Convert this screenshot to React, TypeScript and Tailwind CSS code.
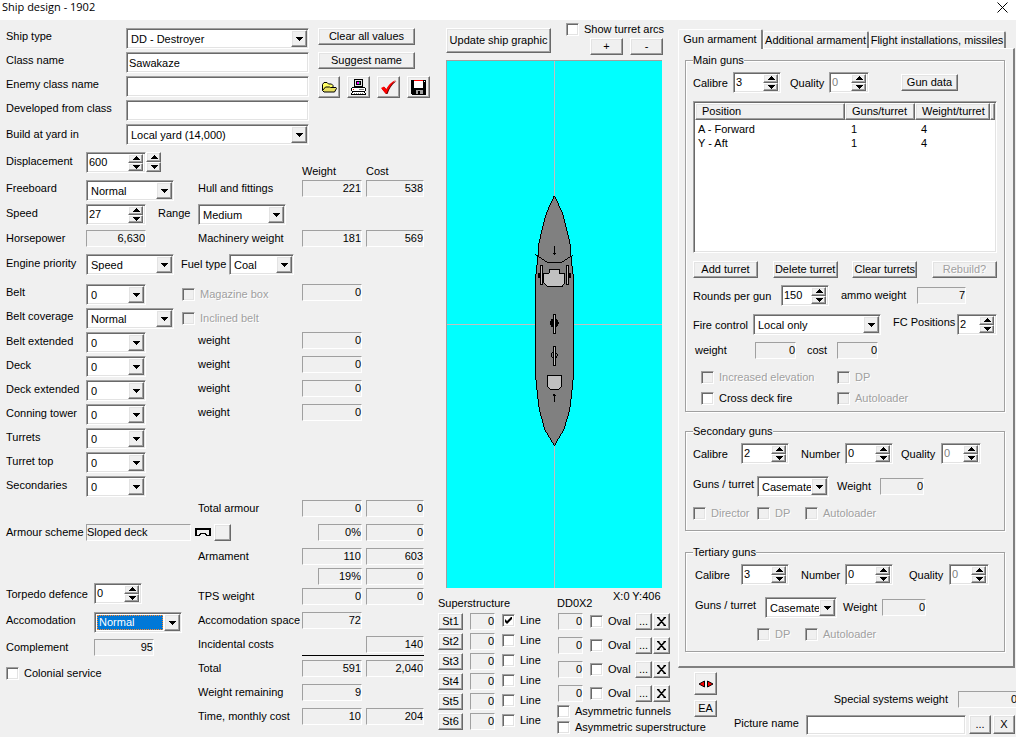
import type { ReactNode } from "react";
import clsx from "clsx";

const sunken =
  "border border-t-[#a0a0a0] border-l-[#a0a0a0] border-r-white border-b-white p-px shadow-[inset_1px_1px_#696969,inset_-1px_-1px_#e3e3e3]";
const raised =
  "bg-[#f0f0f0] border border-t-white border-l-white border-r-[#696969] border-b-[#696969] shadow-[inset_-1px_-1px_#a0a0a0,inset_1px_1px_#e3e3e3]";
const disabledText = "text-[#a0a0a0] [text-shadow:1px_1px_#fff]";

type LabelProps = {
  htmlFor?: string;
  className?: string;
  children: ReactNode;
};

function Label({ htmlFor, className, children }: LabelProps) {
  return (
    <label htmlFor={htmlFor} className={clsx("shrink-0 leading-4", className)}>
      {children}
    </label>
  );
}

type FieldProps = {
  id: string;
  value: string;
  className?: string;
  disabled?: boolean;
  selected?: boolean;
};

function Combo({ id, value, className, selected }: FieldProps) {
  return (
    <div className={clsx("flex h-[21px] shrink-0 bg-white", sunken, className)}>
      <select
        id={id}
        defaultValue={value}
        className={clsx(
          "min-w-0 flex-1 appearance-none overflow-hidden outline-none",
          selected
            ? "m-px border border-dotted border-[#ff8728] bg-[#0078d7] pl-px text-white"
            : "pt-px pl-[3px]"
        )}
      >
        <option>{value}</option>
      </select>
      <span className={clsx("flex w-4 shrink-0 items-center justify-center", raised)} aria-hidden="true">
        <svg width="7" height="4" shapeRendering="crispEdges">
          <path d="M0 0h7L3.5 4z" />
        </svg>
      </span>
    </div>
  );
}

function SpinButtons() {
  return (
    <span className="flex w-[15px] shrink-0 flex-col">
      <button aria-label="Increase" className={clsx("flex flex-1 items-center justify-center", raised)}>
        <svg width="8" height="4" className="shrink-0" shapeRendering="crispEdges">
          <path d="M0 4h8L4 0z" />
        </svg>
      </button>
      <button aria-label="Decrease" className={clsx("flex flex-1 items-center justify-center", raised)}>
        <svg width="8" height="4" className="shrink-0" shapeRendering="crispEdges">
          <path d="M0 0h8L4 4z" />
        </svg>
      </button>
    </span>
  );
}

function Spin({ id, value, className, disabled }: FieldProps) {
  return (
    <div className={clsx("flex h-[21px] shrink-0 bg-white pr-0.5!", sunken, className)}>
      <input
        id={id}
        defaultValue={value}
        disabled={disabled}
        className="min-w-0 flex-1 pl-px outline-none disabled:text-[#808080]"
      />
      <SpinButtons />
    </div>
  );
}

function Value({ className, children }: { className?: string; children: ReactNode }) {
  return (
    <output
      className={clsx(
        "block h-[17px] shrink-0 border border-t-[#a0a0a0] border-l-[#a0a0a0] border-r-white border-b-white text-right leading-[15px]",
        className
      )}
    >
      {children}
    </output>
  );
}

type CheckProps = {
  label: string;
  checked?: boolean;
  disabled?: boolean;
  className?: string;
};

function Check({ label, checked, disabled, className }: CheckProps) {
  return (
    <label
      className={clsx(
        "flex h-[13px] shrink-0 items-center gap-[5px] whitespace-nowrap",
        disabled && disabledText,
        className
      )}
    >
      <span className="grid place-items-center">
        <input
          type="checkbox"
          defaultChecked={checked}
          disabled={disabled}
          className={clsx("col-start-1 row-start-1 size-[13px] appearance-none bg-white disabled:bg-[#f0f0f0]", sunken)}
        />
        {checked && (
          <svg width="7" height="7" className="pointer-events-none col-start-1 row-start-1">
            <path d="M0 2v3l2 2 5-5V-1L2 4z" />
          </svg>
        )}
      </span>
      {label}
    </label>
  );
}

type ButtonProps = {
  className?: string;
  disabled?: boolean;
  label?: string;
  children?: ReactNode;
};

function Button({ className, disabled, label, children }: ButtonProps) {
  return (
    <button
      disabled={disabled}
      aria-label={label}
      className={clsx(
        "flex shrink-0 items-center justify-center whitespace-nowrap",
        raised,
        disabled && disabledText,
        className
      )}
    >
      {children}
    </button>
  );
}

function FolderIcon() {
  return (
    <svg width="15" height="11" viewBox="0 0 15 11" strokeLinejoin="round">
      <path d="M.5 8.5v-6l1.500-2h3l1.500 1.500h3l1.500 1.500v2" fill="#ff6" stroke="#000" />
      <path d="M.5 8.500 3.500 5h4l1 .5h5.500l.5 1-2 3.500H2z" fill="#e8e060" stroke="#000" />
    </svg>
  );
}

function ComputerIcon() {
  return (
    <svg width="15" height="16" viewBox="0 0 15 16" className="shrink-0" shapeRendering="crispEdges">
      <path d="M3 0h9v8H3z" />
      <path d="M4 1h7v6H4z" fill="#e3e3e3" />
      <path d="M5 2h5v4H5z" />
      <path d="M6 3h2v2H6z" fill="#f0f" />
      <path d="M8 3h1v2H8z" fill="#00c060" />
      <path d="M1 8h13v1h1v3h-1v1H1v-1H0V9h1z" />
      <path d="M1 9h13v3H1z" fill="#fff" />
      <path d="M2 10h1v1H2z" fill="red" />
      <path d="M8 10h5v1H8z" fill="#808080" />
      <path d="M2 12h11v1h1v1h1v2H0v-2h1v-1h1z" />
      <path d="M2 13h11v1h1v1H1v-1h1z" fill="#fff" />
      <path d="M3 14h1v1H3zM5 14h1v1H5zM7 14h1v1H7zM9 14h1v1H9zM11 14h1v1h-1z" fill="#808080" />
    </svg>
  );
}

function TickIcon() {
  return (
    <svg width="16" height="15" viewBox="0 0 16 15">
      <path d="M1 9 3.500 7l2 2.500Q9 3 15.500 1 9 6 6.500 14H5z" fill="#600" />
      <path d="M0 8 3 6.500l2 3Q8.500 2.500 15 0 8.500 5.500 5.500 13.500H4.500z" fill="red" />
    </svg>
  );
}

function DiskIcon() {
  return (
    <svg width="15" height="15" viewBox="0 0 15 15" shapeRendering="crispEdges">
      <path d="M0 0h15v15H1l-1-1z" />
      <path d="M3 1h9v7H3z" fill="#fff" />
      <path d="M3 0h9v1H3z" fill="red" />
      <path d="M13 1h1v1h-1z" fill="#fff" />
      <path d="M5 10h7v4H5z" fill="#a0a0a0" />
      <path d="M7 11h2v3H7z" />
    </svg>
  );
}

/* Cross section of a sloped armour deck */
function SlopedDeckIcon() {
  return (
    <svg width="16" height="9" viewBox="0 0 16 9" fill="none" stroke="#000" shapeRendering="crispEdges">
      <path d="M0 1h16" strokeWidth="2" />
      <path d="M1 0v8M15 0v8" strokeWidth="2" />
      <path d="M0 7.500h4L6 5.500h4l2 2h4" />
    </svg>
  );
}

/* Top view of the hull, drawn at three units to the pixel */
function ShipPlan() {
  return (
    <svg viewBox="1 1 215 527" className="size-full" shapeRendering="crispEdges" role="img" aria-label="Ship plan">
      <path d="M108.500 0v528M0 264.500h216" stroke="#c0c0c0" />
      <g transform="translate(74 120) scale(.33333)" fill="none" stroke="#000" strokeWidth="3">
        <path
          d="M103 47 79 100 67 145 57 190 53 240 47 290V590L52 640 58 690 75 750 103 797 131 750 149 690 155 640 160 590V290L154 240 150 190 139 145 128 100z"
          fill="#808080"
        />
        <path d="M46 223 82 247H125L158 226M103 198v26M98 218l5 6 5-6M103 665v-24M98 648l5-6 5 6" />
        <path d="M88 268h30v12h17v28l-9 12H82l-10-12v-28h16z" fill="#c0c0c0" />
        <path d="M55 280h7v14h-7zM145 280h7v14h-7z" fill="#000" />
        <path d="M61 257h7v56h-7zM139 257h7v56h-7z" fill="#c0c0c0" />
        <circle cx="103" cy="429" r="12" fill="#000" />
        <circle cx="103" cy="526" r="9" />
        <path d="M100 403h7v57h-7zM100 499h7v57h-7z" fill="#c0c0c0" />
        <path d="M82 586h43v33l-8 9H91l-9-9z" fill="#c0c0c0" />
      </g>
    </svg>
  );
}

type RowProps = {
  className?: string;
  left?: ReactNode;
  label?: ReactNode;
  weight?: string;
  cost?: string;
  percent?: boolean;
};

function Row({ className = "h-6", left, label, weight, cost, percent }: RowProps) {
  return (
    <div className={clsx("flex items-start", className)}>
      {left && <div className="flex w-48 shrink-0 items-start">{left}</div>}
      <span className="w-[104px] shrink-0 leading-4 whitespace-nowrap">{label}</span>
      <div className="flex w-[60px] shrink-0 justify-end">
        {weight && <Value className={percent ? "w-11" : "w-full"}>{weight}</Value>}
      </div>
      {cost && <Value className="ml-1 w-[58px]">{cost}</Value>}
    </div>
  );
}

const armour = [
  { id: "belt-extended", name: "Belt extended", weight: "0" },
  { id: "deck", name: "Deck", weight: "0" },
  { id: "deck-extended", name: "Deck extended", weight: "0" },
  { id: "conning-tower", name: "Conning tower", weight: "0" },
  { id: "turrets", name: "Turrets" },
  { id: "turret-top", name: "Turret top" },
  { id: "secondaries", name: "Secondaries" },
];

function GeneralForm() {
  return (
    <div className="flex gap-[9px]">
      <div className="grid grid-cols-[120px_183px] gap-y-[3px]">
        <Label htmlFor="ship-type">Ship type</Label>
        <Combo id="ship-type" value="DD - Destroyer" />
        <Label htmlFor="class-name">Class name</Label>
        <input id="class-name" defaultValue="Sawakaze" className={clsx("h-[21px] bg-white pl-0.5 outline-none", sunken)} />
        <Label htmlFor="enemy-class">Enemy class name</Label>
        <input id="enemy-class" className={clsx("h-[21px] bg-white outline-none", sunken)} />
        <Label htmlFor="developed-from">Developed from class</Label>
        <input id="developed-from" className={clsx("h-[21px] bg-white outline-none", sunken)} />
        <Label htmlFor="yard" className="pt-0.5">Build at yard in</Label>
        <Combo id="yard" value="Local yard (14,000)" />
      </div>
      <div className="flex flex-col gap-[7px]">
        <Button className="h-[17px] w-[97px]">Clear all values</Button>
        <Button className="h-[17px] w-[97px]">Suggest name</Button>
        <div className="flex gap-[7px]">
          <Button label="Open" className="h-[22px] w-[22px]"><FolderIcon /></Button>
          <Button label="Load from computer" className="h-[22px] w-[23px]"><ComputerIcon /></Button>
          <Button label="Accept" className="h-[22px] w-[23px]"><TickIcon /></Button>
          <Button label="Save" className="h-[22px] w-[23px]"><DiskIcon /></Button>
        </div>
      </div>
    </div>
  );
}

function HullForm() {
  return (
    <div className="mt-[7px]">
      <div className="flex h-7 items-start">
        <Label htmlFor="displacement" className="w-20 pt-px">Displacement</Label>
        <Spin id="displacement" value="600" className="w-[60px]" />
        <span className="flex h-5"><SpinButtons /></span>
        <span className="mt-[11px] ml-[141px] w-16 leading-4">Weight</span>
        <span className="mt-[11px] leading-4">Cost</span>
      </div>
      <Row
        left={<>
          <Label htmlFor="freeboard" className="w-20">Freeboard</Label>
          <Combo id="freeboard" value="Normal" className="w-[88px]" />
        </>}
        label="Hull and fittings"
        weight="221"
        cost="538"
      />
      <div className="flex h-[26px] items-start">
        <Label htmlFor="speed" className="w-20 pt-px">Speed</Label>
        <Spin id="speed" value="27" className="w-[60px]" />
        <Label htmlFor="range" className="ml-3 w-10 pt-px">Range</Label>
        <Combo id="range" value="Medium" className="w-[88px]" />
      </div>
      <Row
        left={<>
          <span className="w-20 leading-4">Horsepower</span>
          <Value className="w-[60px]">6,630</Value>
        </>}
        label="Machinery weight"
        weight="181"
        cost="569"
      />
      <div className="flex h-[30px] items-start">
        <Label htmlFor="engine" className="w-20 pt-px">Engine priority</Label>
        <Combo id="engine" value="Speed" className="w-[88px]" />
        <Label htmlFor="fuel" className="ml-[7px] w-12 pt-0.5">Fuel type</Label>
        <Combo id="fuel" value="Coal" className="w-[65px]" />
      </div>
      <div className="flex h-6 items-start">
        <Label htmlFor="belt" className="w-20">Belt</Label>
        <Combo id="belt" value="0" className="w-[60px]" />
        <Check label="Magazine box" disabled className="mt-1 ml-9 w-[120px]" />
        <Value className="w-[60px]">0</Value>
      </div>
      <div className="flex h-6 items-start">
        <Label htmlFor="belt-coverage" className="w-20">Belt coverage</Label>
        <Combo id="belt-coverage" value="Normal" className="w-[88px]" />
        <Check label="Inclined belt" disabled className="mt-1 ml-2" />
      </div>
      {armour.map((item) => (
        <Row
          key={item.id}
          left={<>
            <Label htmlFor={item.id} className="w-20 pt-px whitespace-nowrap">{item.name}</Label>
            <Combo id={item.id} value="0" className="w-[60px]" />
          </>}
          label={item.weight && "weight"}
          weight={item.weight}
        />
      ))}
      <Row left={<span />} label="Total armour" weight="0" cost="0" />
      <div className="flex h-6 items-start">
        <span className="w-20 shrink-0 leading-4 whitespace-nowrap">Armour scheme</span>
        <Value className="w-[105px] text-left!">Sloped deck</Value>
        <span className="ml-1 pt-1"><SlopedDeckIcon /></span>
        <Button label="Change armour scheme" className="ml-[3px] h-[17px] w-[17px]" />
        <Value className="ml-[87px] w-11">0%</Value>
        <Value className="ml-1 w-[58px]">0</Value>
      </div>
    </div>
  );
}

function WeightSummary() {
  return (
    <div className="flex">
      <div className="flex w-48 flex-col pt-[35px]">
        <div className="flex h-[29px] items-start">
          <Label htmlFor="torpedo" className="w-[88px] pt-[3px] whitespace-nowrap">Torpedo defence</Label>
          <Spin id="torpedo" value="0" className="w-12" />
        </div>
        <div className="flex h-[27px] items-start">
          <Label htmlFor="accomodation" className="w-[88px]">Accomodation</Label>
          <Combo id="accomodation" value="Normal" selected className="w-[88px]" />
        </div>
        <div className="flex h-7 items-start">
          <span className="w-[88px] leading-4">Complement</span>
          <Value className="w-[60px]">95</Value>
        </div>
        <Check label="Colonial service" />
      </div>
      <div>
        <Row className="h-5" label="Armament" weight="110" cost="603" />
        <Row className="h-5" weight="19%" cost="0" percent />
        <Row label="TPS weight" weight="0" cost="0" />
        <Row label="Accomodation space" weight="72" />
        <Row className="h-[19px]" label="Incidental costs" cost="140" />
        <hr className="mb-1 ml-[104px] border-black" />
        <Row label="Total" weight="591" cost="2,040" />
        <Row label="Weight remaining" weight="9" />
        <Row label="Time, monthly cost" weight="10" cost="204" />
      </div>
    </div>
  );
}

function ShipGraphic() {
  return (
    <section className="w-60 shrink-0 pt-[3px]">
      <div className="flex h-[37px] items-start pl-2">
        <Button className="mt-[5px] h-[25px] w-[105px]">Update ship graphic</Button>
        <div className="ml-[15px]">
          <Check label="Show turret arcs" />
          <div className="mt-0.5 flex gap-[7px] pl-6">
            <Button className="h-[17px] w-[33px]">+</Button>
            <Button className="h-[17px] w-[33px]">-</Button>
          </div>
        </div>
      </div>
      <div className="ml-2 h-[528px] w-[216px] border-t border-l border-[#a0a0a0] bg-[#00ffff]">
        <ShipPlan />
      </div>
      <div className="flex h-[25px] items-end pb-0.5 leading-4">
        <span className="w-[119px]">Superstructure</span>
        <span className="w-14">DD0X2</span>
        <span className="self-start whitespace-nowrap">X:0 Y:406</span>
      </div>
      <div className="flex">
        <div className="w-[119px] shrink-0">
          {["St1", "St2", "St3", "St4", "St5", "St6"].map((name, i) => (
            <div key={name} className="flex h-5 items-start">
              <Button className="h-[17px] w-[25px]">{name}</Button>
              <Value className="mx-[7px] w-[25px]">0</Value>
              <Check label="Line" checked={i === 0} className="mt-px" />
            </div>
          ))}
        </div>
        <div>
          {["A", "B", "C", "D"].map((name) => (
            <div key={name} className="flex h-6 items-start">
              <Value className="mr-[7px] ml-px w-[25px]">0</Value>
              <Check label="Oval" className="mt-0.5 w-[45px]" />
              <Button className="h-[17px] w-[17px]">...</Button>
              <Button label="Remove" className="ml-px h-[17px] w-[17px]">
                <svg width="9" height="9" stroke="#000" strokeWidth="1.5">
                  <path d="M1 .5l7 8M8 .5l-7 8M0 .5h2.500M6.500.5H9M0 8.500h2.500M6.500 8.500H9" />
                </svg>
              </Button>
            </div>
          ))}
          <Check label="Asymmetric funnels" className="-mt-1" />
          <Check label="Asymmetric superstructure" className="mt-[3px]" />
        </div>
      </div>
    </section>
  );
}

function Group({ title, className, children }: { title: string; className?: string; children: ReactNode }) {
  return (
    <fieldset
      className={clsx(
        "border border-[#a0a0a0] px-[7px] pt-[5px] shadow-[inset_1px_1px_#fff,1px_1px_#fff]",
        className
      )}
    >
      <legend className="bg-[#f0f0f0] leading-[14px]">{title}</legend>
      {children}
    </fieldset>
  );
}

const headCell = clsx("text-left font-normal", raised);

function MainGuns() {
  return (
    <Group title="Main guns" className="pb-1.5">
      <div className="flex items-center">
        <Label htmlFor="main-calibre" className="w-10">Calibre</Label>
        <Spin id="main-calibre" value="3" className="w-12" />
        <Label htmlFor="main-quality" className="ml-[9px] w-[39px]">Quality</Label>
        <Spin id="main-quality" value="0" disabled className="w-10" />
        <Button className="ml-8 h-[17px] w-[57px]">Gun data</Button>
      </div>
      <div className={clsx("mt-2 h-[152px] bg-white", sunken)}>
        <table className="w-full table-fixed border-separate border-spacing-0">
          <thead>
            <tr className="h-[17px]">
              <th className={clsx("w-[150px] pl-1.5", headCell)}>Position</th>
              <th className={clsx("w-[70px] pl-1.5", headCell)}>Guns/turret</th>
              <th className={clsx("w-[75px] pl-1.5", headCell)}>Weight/turret</th>
              <th className={headCell} />
            </tr>
          </thead>
          <tbody className="leading-[14px]">
            <tr>
              <td className="pt-0.5 pl-[3px]">A - Forward</td>
              <td className="pt-0.5 pl-1.5">1</td>
              <td className="pt-0.5 pl-1.5">4</td>
            </tr>
            <tr>
              <td className="pl-[3px]">Y - Aft</td>
              <td className="pl-1.5">1</td>
              <td className="pl-1.5">4</td>
            </tr>
          </tbody>
        </table>
      </div>
      <div className="mt-2 flex justify-between">
        <Button className="h-[17px] w-[65px]">Add turret</Button>
        <Button className="h-[17px] w-[65px]">Delete turret</Button>
        <Button className="h-[17px] w-[65px]">Clear turrets</Button>
        <Button className="h-[17px] w-[65px]" disabled>Rebuild?</Button>
      </div>
      <div className="mt-[7px] flex items-center">
        <Label htmlFor="rounds" className="w-[88px]">Rounds per gun</Label>
        <Spin id="rounds" value="150" className="w-12" />
        <span className="ml-3 w-[76px]">ammo weight</span>
        <Value className="w-[49px]">7</Value>
      </div>
      <div className="mt-2 flex items-center">
        <Label htmlFor="fire-control" className="w-[60px]">Fire control</Label>
        <Combo id="fire-control" value="Local only" className="w-32" />
        <Label htmlFor="fc-positions" className="ml-3 w-16 self-start">FC Positions</Label>
        <Spin id="fc-positions" value="2" className="w-10" />
      </div>
      <div className="mt-[7px] flex items-center">
        <span className="w-[62px] pl-0.5">weight</span>
        <Value className="w-[41px]">0</Value>
        <span className="ml-[11px] w-[30px]">cost</span>
        <Value className="w-[41px]">0</Value>
      </div>
      <div className="mt-3 grid grid-cols-[136px_1fr] gap-y-2 pl-2">
        <Check label="Increased elevation" disabled />
        <Check label="DP" disabled />
        <Check label="Cross deck fire" />
        <Check label="Autoloader" disabled />
      </div>
    </Group>
  );
}

function SecondaryGuns() {
  return (
    <Group title="Secondary guns" className="mt-3 pb-2.5">
      <div className="flex items-center">
        <Label htmlFor="sec-calibre" className="w-12">Calibre</Label>
        <Spin id="sec-calibre" value="2" className="w-12" />
        <Label htmlFor="sec-number" className="ml-3 w-11">Number</Label>
        <Spin id="sec-number" value="0" className="w-12" />
        <Label htmlFor="sec-quality" className="ml-2 w-10">Quality</Label>
        <Spin id="sec-quality" value="0" disabled className="w-10" />
      </div>
      <div className="mt-3 flex items-center">
        <Label htmlFor="sec-turret" className="w-16 self-start">Guns / turret</Label>
        <Combo id="sec-turret" value="Casemates" className="w-[72px]" />
        <span className="ml-2 w-[43px]">Weight</span>
        <Value className="w-11">0</Value>
      </div>
      <div className="mt-2.5 flex">
        <Check label="Director" disabled className="w-16" />
        <Check label="DP" disabled className="w-12" />
        <Check label="Autoloader" disabled />
      </div>
    </Group>
  );
}

function TertiaryGuns() {
  return (
    <Group title="Tertiary guns" className="mt-3.5 pb-2.5">
      <div className="flex items-center">
        <Label htmlFor="ter-calibre" className="w-12 pl-0.5">Calibre</Label>
        <Spin id="ter-calibre" value="3" className="w-12" />
        <Label htmlFor="ter-number" className="ml-3 w-11">Number</Label>
        <Spin id="ter-number" value="0" className="w-12" />
        <Label htmlFor="ter-quality" className="ml-4 w-10">Quality</Label>
        <Spin id="ter-quality" value="0" disabled className="w-10" />
      </div>
      <div className="mt-3 flex items-center">
        <Label htmlFor="ter-turret" className="w-[72px] self-start pl-0.5">Guns / turret</Label>
        <Combo id="ter-turret" value="Casemates" className="w-[72px]" />
        <span className="ml-1.5 w-[39px]">Weight</span>
        <Value className="w-11">0</Value>
      </div>
      <div className="mt-2.5 flex pl-16">
        <Check label="DP" disabled className="w-12" />
        <Check label="Autoloader" disabled />
      </div>
    </Group>
  );
}

const tab =
  "shrink-0 rounded-t-xs border-t border-l border-t-white border-l-white border-r-2 border-r-[#808080] whitespace-nowrap";

function Armament() {
  return (
    <section className="min-w-0 flex-1 pt-2">
      <div role="tablist" className="flex h-5 items-end">
        <button role="tab" aria-selected="true" className={clsx("-mb-px h-5 w-[85px] bg-[#f0f0f0]", tab)}>
          Gun armament
        </button>
        <button role="tab" aria-selected="false" className={clsx("h-[17px] w-[106px]", tab)}>
          Additional armament
        </button>
        <button role="tab" aria-selected="false" className={clsx("h-[17px] w-[137px]", tab)}>
          Flight installations, missiles
        </button>
      </div>
      <div className="mr-px border border-t-white border-r-2 border-b-2 border-l-white border-r-[#808080] border-b-[#808080] pt-1 pr-2 pb-3.5 pl-1.5">
        <MainGuns />
        <SecondaryGuns />
        <TertiaryGuns />
      </div>
      <div className="mt-1 flex pl-4">
        <div className="flex flex-col gap-[5px]">
          <Button label="Mirror" className="h-[23px] w-[23px]">
            <svg width="16" height="8" viewBox="0 0 16 8" fill="red" stroke="#000">
              <path d="M6.500 1v6L1 4zM9.500 1v6L15 4z" />
            </svg>
          </Button>
          <Button className="h-[17px] w-[23px]">EA</Button>
        </div>
        <div className="flex min-w-0 flex-1 flex-col pt-[19px] pl-[17px]">
          <div className="flex justify-end">
            <span className="mr-2.5 leading-4">Special systems weight</span>
            <Value className="-mr-0.5 w-[60px]">0</Value>
          </div>
          <div className="mt-[7px] flex pr-px">
            <Label htmlFor="picture-name" className="w-[72px]">Picture name</Label>
            <input id="picture-name" className={clsx("h-5 min-w-0 flex-1 bg-white outline-none", sunken)} />
            <Button className="ml-[3px] h-[19px] w-[22px]">...</Button>
            <Button className="ml-0.5 h-[19px] w-[22px]">X</Button>
          </div>
        </div>
      </div>
    </section>
  );
}

export default function App() {
  return (
    <div className="min-h-screen overflow-hidden bg-[#f0f0f0] font-['Liberation_Sans',Arial,sans-serif] text-[11px] leading-[13px] text-black">
      <header className="flex h-5 items-start justify-between bg-white pr-2 pl-0.5">
        <h1 className="font-['Open_Sans',sans-serif] text-[11px] leading-[14px]">Ship design - 1902</h1>
        <button aria-label="Close" className="pt-0.5">
          <svg width="11" height="11" stroke="#000">
            <path d="M.5.5l10 10M10.500.5l-10 10" />
          </svg>
        </button>
      </header>
      <main className="flex">
        <section className="w-[438px] shrink-0 pt-2 pl-1.5">
          <GeneralForm />
          <HullForm />
          <WeightSummary />
        </section>
        <ShipGraphic />
        <Armament />
      </main>
    </div>
  );
}
